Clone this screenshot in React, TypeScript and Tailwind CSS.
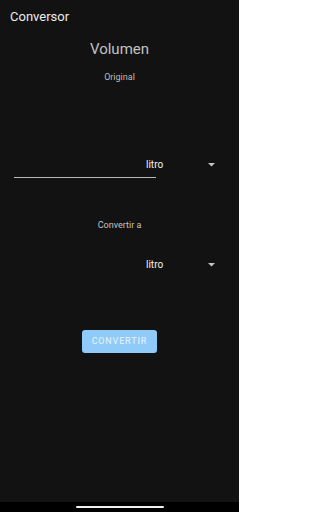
import React from "react";

function Caret() {
  return (
    <svg width="7" height="4" viewBox="0 0 7 4" className="block">
      <polygon points="0,0 7,0 3.5,3.5" fill="#c4c4c4" />
    </svg>
  );
}

function UnitSelect({ value }: { value: string }) {
  return (
    <div className="-ml-[10px] flex h-[22px] w-[75px] items-center justify-between pr-[6px]">
      <span className="text-[10px] leading-[12px] text-[#f2f2f2]">{value}</span>
      <Caret />
    </div>
  );
}

export default function App() {
  return (
    <div
      className="flex h-[512px] w-[239px] flex-col bg-[#121212]"
      style={{ fontFamily: "Roboto, 'Liberation Sans', sans-serif" }}
    >
      <div className="flex-1">
        {/* Top bar */}
        <div className="flex h-[33px] items-center px-[10px]">
          <span className="text-[13px] leading-[20px] text-[#ececec]">Conversor</span>
        </div>

        <h1 className="mt-[6px] text-center text-[15px] leading-[20px] text-[#c2c2c2]">Volumen</h1>
        <p className="mt-[12px] text-center text-[9px] leading-[12px] text-[#bdbdbd]">Original</p>

        {/* Input row */}
        <div className="mt-[71px] flex items-start px-[14px]">
          <div className="h-[24px] w-[142px] border-b border-[#b8b8b8]" />
          <UnitSelect value="litro" />
        </div>

        <p className="mt-[41px] text-center text-[9px] leading-[12px] text-[#c4c4c4]">Convertir a</p>

        {/* Output row */}
        <div className="mt-[23px] flex items-start px-[14px]">
          <div className="h-[24px] w-[142px]" />
          <UnitSelect value="litro" />
        </div>

        <div className="mt-[52px] flex justify-center">
          <button className="h-[23px] w-[75px] rounded-[3px] bg-[#90caf9] text-[9px] font-medium tracking-[0.09em] text-[#dcedfc]">
            CONVERTIR
          </button>
        </div>
      </div>

      {/* System nav */}
      <div className="flex h-[10px] justify-center bg-black pt-[4px]">
        <div className="h-[2px] w-[88px] rounded-full bg-[#f0f0f0]" />
      </div>
    </div>
  );
}
